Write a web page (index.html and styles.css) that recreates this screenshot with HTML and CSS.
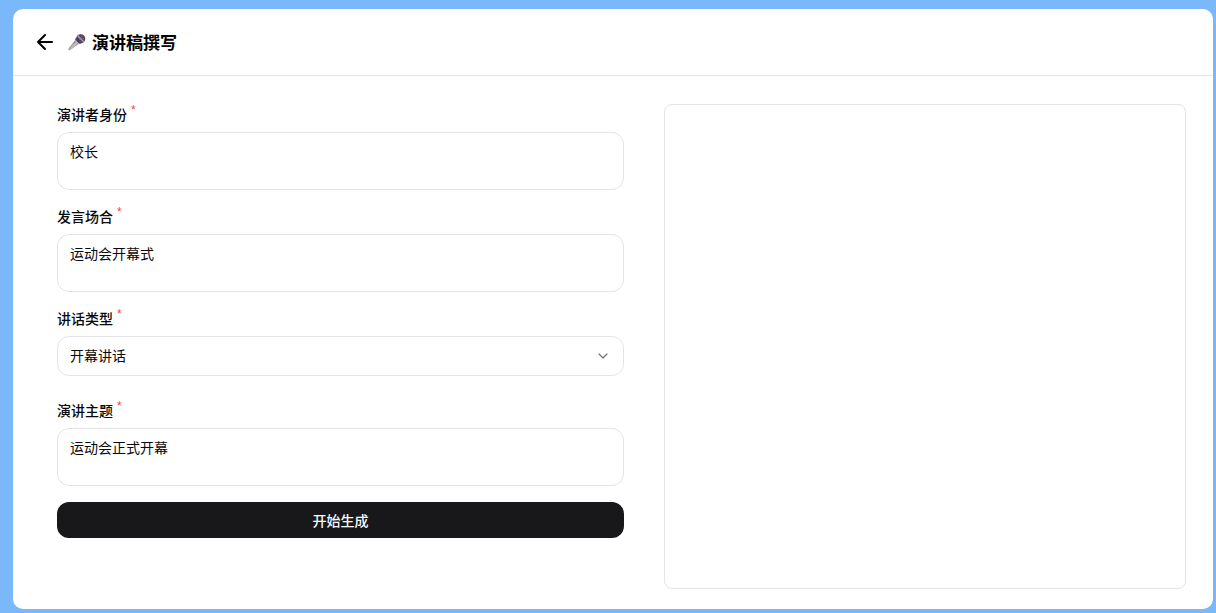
FILE: index.html
```html
<!DOCTYPE html>
<html lang="zh-CN">
<head>
    <meta charset="UTF-8">
    <meta name="viewport" content="width=device-width, initial-scale=1.0">
    <title>演讲稿撰写</title>
    <link rel="stylesheet" href="styles.css">
</head>
<body>
    <div class="panel">
        <header class="header">
            <button type="button" class="back-btn" aria-label="返回">
                <svg width="18" height="18" viewBox="0 0 18 18" fill="none" stroke="currentColor" stroke-width="2" stroke-linecap="round" stroke-linejoin="round">
                    <path d="M16 9H2M9 2L2 9l7 7"/>
                </svg>
            </button>
            <svg class="mic" width="18" height="18" viewBox="0 0 18 18">
                <path d="M8.4 5.4L.5 15.6q-.5 1 .3 1.5t1.5-.1l10.2-7.4z" fill="#a39ea3"/>
                <path d="M9.3 6.6L1.3 16.4l.8.4 9.2-8z" fill="#c3bfc3"/>
                <path d="M5.8 10.4l1.4-1.5" stroke="#6d6674" stroke-width="1"/>
                <path d="M7.9 4.7l5.4 5.4-1.7 1L7 6.4z" fill="#6f6578"/>
                <circle cx="12.7" cy="5.8" r="4.6" fill="#4c3f5c"/>
                <path d="M9.8 2.9l5.9 5.9" stroke="#a99fb5" stroke-width="1.5"/>
                <path d="M11.5 2.1l4.8 4.8M14 1.8l2.7 2.7M10 7.6l5-5M12 9.1l4.5-4.5" stroke="#7b6f8b" stroke-width=".5"/>
            </svg>
            <h1>演讲稿撰写</h1>
        </header>
        <main class="content">
            <form id="speechForm" class="form">
                <div class="form-group">
                    <label for="identity">演讲者身份<span class="required">*</span></label>
                    <textarea id="identity" name="identity" required>校长</textarea>
                </div>
                <div class="form-group">
                    <label for="occasion">发言场合<span class="required">*</span></label>
                    <textarea id="occasion" name="occasion" required>运动会开幕式</textarea>
                </div>
                <div class="form-group select-group">
                    <label for="type">讲话类型<span class="required">*</span></label>
                    <div class="select-box">
                        <select id="type" name="type" required>
                            <option selected>开幕讲话</option>
                        </select>
                        <svg class="chevron" width="10" height="6" viewBox="0 0 10 6" fill="none" stroke="currentColor" stroke-width="1.2" stroke-linecap="round" stroke-linejoin="round">
                            <path d="M1 1l4 4 4-4"/>
                        </svg>
                    </div>
                </div>
                <div class="form-group">
                    <label for="topic">演讲主题<span class="required">*</span></label>
                    <textarea id="topic" name="topic" required>运动会正式开幕</textarea>
                </div>
                <button type="submit" class="submit-btn">开始生成</button>
            </form>
            <section class="result" aria-label="生成结果"></section>
        </main>
    </div>
</body>
</html>
```

FILE: styles.css
```css
* {
    box-sizing: border-box;
}
body {
    display: flex;
    min-height: 100vh;
    margin: 0;
    padding: 9px 3px 4px 13px;
    background-color: #7ab8f9;
    color: #09090b;
    font-family: "Noto Sans CJK SC", sans-serif;
    font-size: 14px;
    line-height: 20px;
}
.panel {
    display: flex;
    flex: 1;
    flex-direction: column;
    border-radius: 10px;
    background: white;
}
/* 顶部标题栏 */
.header {
    display: flex;
    align-items: center;
    height: 67px;
    padding: 0 23px;
    border-bottom: 1px solid #e4e4e7;
}
.back-btn {
    display: flex;
    padding: 0;
    border: none;
    background: none;
    color: black;
    cursor: pointer;
}
.mic {
    margin: 0 6px 0 14px;
}
h1 {
    margin: 0;
    color: black;
    font-size: 17px;
    font-weight: 600;
    line-height: 24px;
}
.content {
    display: grid;
    flex: 1;
    grid-template-columns: 25fr 23fr;
    gap: 40px;
    padding: 28px 27px 20px 44px;
}
/* 表单 */
.form {
    display: flex;
    flex-direction: column;
    gap: 16px;
}
.form-group {
    display: flex;
    flex-direction: column;
    gap: 8px;
}
.select-group {
    margin-bottom: 8px;
}
label {
    display: flex;
    gap: 4px;
    font-weight: 500;
}
.required {
    color: #ef4444;
    font-family: "Liberation Sans", sans-serif;
    font-size: 12px;
    font-weight: 400;
    line-height: 12px;
}
textarea,
select {
    display: block;
    width: 100%;
    border: 1px solid #e4e4e7;
    border-radius: 12px;
    background: white;
    color: inherit;
    font: inherit;
}
textarea {
    height: 58px;
    padding: 8px 12px;
    resize: none;
}
select {
    height: 40px;
    padding: 0 12px 2px;
    appearance: none;
}
.select-box {
    display: grid;
    align-items: center;
}
.select-box select,
.chevron {
    grid-area: 1 / 1;
}
.chevron {
    justify-self: end;
    margin-right: 16px;
    color: #71717a;
    pointer-events: none;
}
.submit-btn {
    height: 36px;
    border: none;
    border-radius: 12px;
    background-color: #18181b;
    color: #fafafa;
    font: inherit;
    font-weight: 500;
    cursor: pointer;
}
.submit-btn:hover {
    background-color: #2f2f33;
}
.result {
    border: 1px solid #e4e4e7;
    border-radius: 8px;
}
@media (max-width: 700px) {
    .content {
        grid-template-columns: 1fr;
        padding: 20px;
    }
    .result {
        min-height: 300px;
    }
}
```
